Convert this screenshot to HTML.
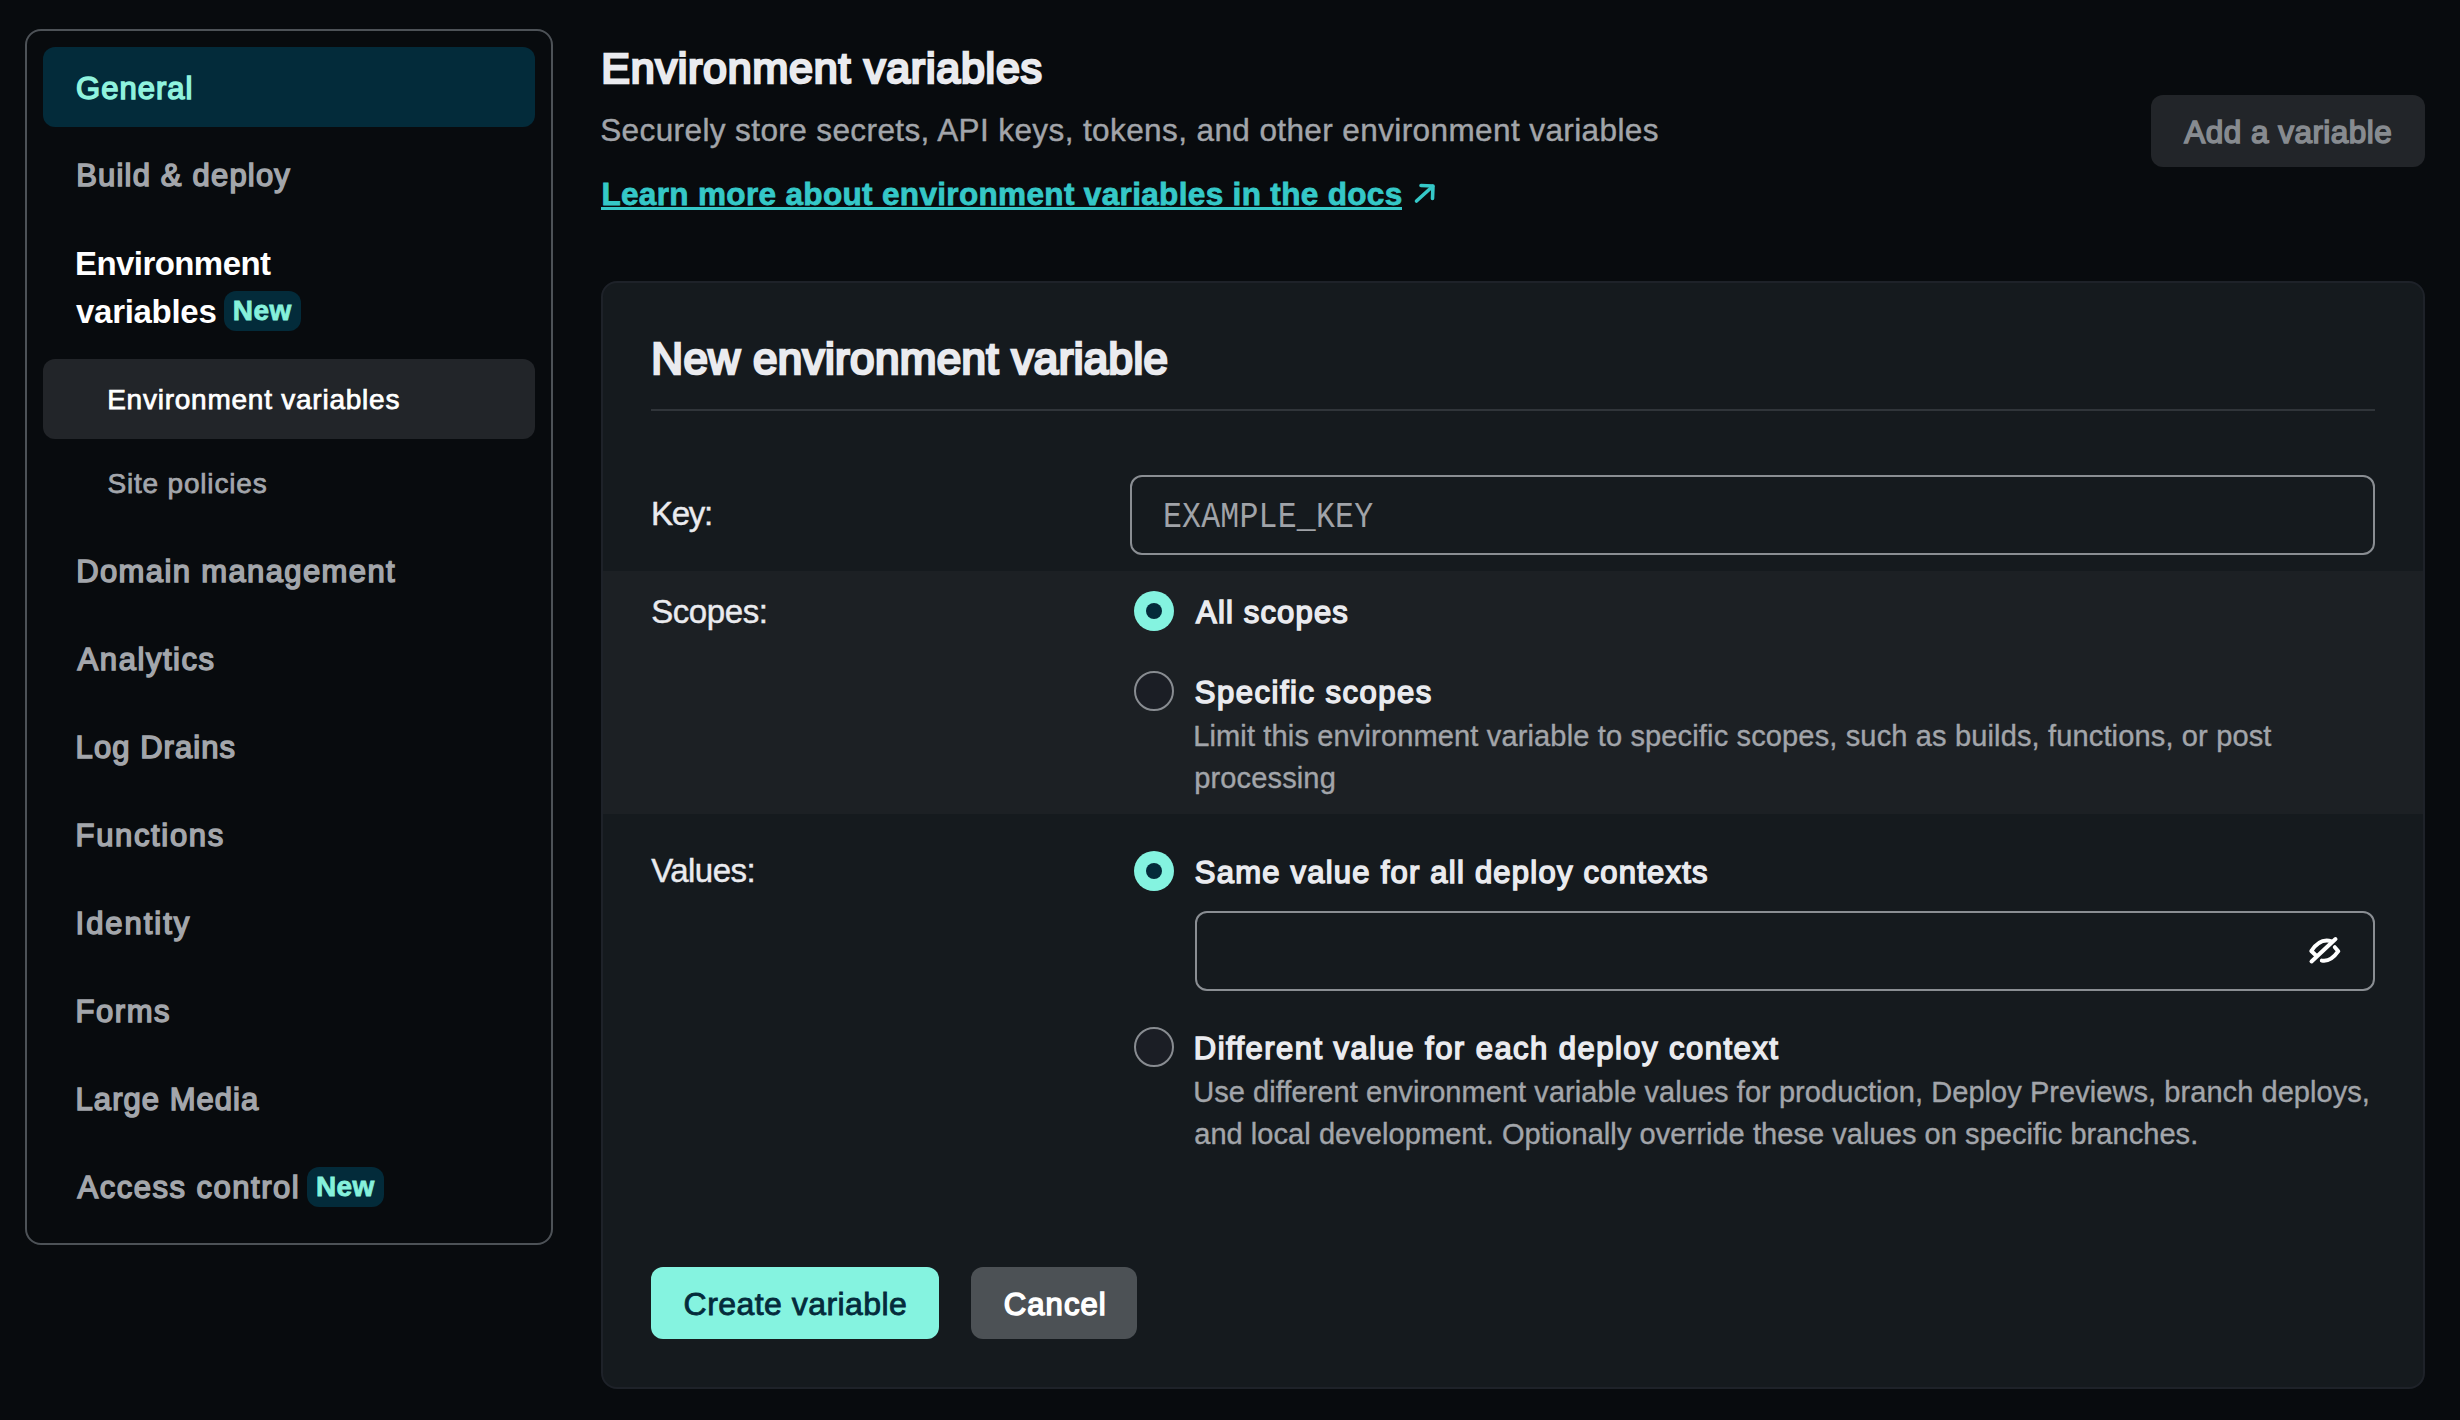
<!DOCTYPE html>
<html><head><meta charset="utf-8"><style>
html,body{margin:0;padding:0;}
body{width:2460px;height:1420px;background:#080b0e;position:relative;overflow:hidden;font-family:"Liberation Sans",sans-serif;}
.abs,.t{position:absolute;}
.t{white-space:nowrap;}
.box{position:absolute;box-sizing:border-box;}
</style></head><body>
<div class="box" style="left:25px;top:29px;width:528px;height:1216px;border:2px solid #4d5257;border-radius:16px;"></div>
<div class="box" style="left:43px;top:47px;width:492px;height:80px;background:#032b3a;border-radius:12px;"></div>
<div class="box" style="left:224px;top:291px;width:77px;height:40px;background:#032b3a;border-radius:12px;"></div>
<div class="box" style="left:43px;top:359px;width:492px;height:80px;background:#222529;border-radius:12px;"></div>
<div class="box" style="left:307px;top:1167px;width:77px;height:40px;background:#032b3a;border-radius:12px;"></div>

<div class="box" style="left:2151px;top:95px;width:274px;height:72px;background:#222529;border-radius:12px;"></div>
<div class="box" style="left:601px;top:281px;width:1824px;height:1108px;background:#151a1e;border:2px solid #1e2229;border-radius:16px;overflow:hidden;">
  <div class="box" style="left:0;top:288px;width:100%;height:243px;background:#1c2024;"></div>
</div>
<div class="box" style="left:651px;top:409px;width:1724px;height:2px;background:#30353a;"></div>
<div class="box" style="left:1130px;top:475px;width:1245px;height:80px;border:2px solid #8a8e93;border-radius:12px;"></div>
<div class="box" style="left:1195px;top:911px;width:1180px;height:80px;border:2px solid #8a8e93;border-radius:12px;"></div>

<div class="box" style="left:1134px;top:591px;width:40px;height:40px;border-radius:50%;background:#84f3e0;"></div>
<div class="box" style="left:1146px;top:603px;width:16px;height:16px;border-radius:50%;background:#042a3a;"></div>
<div class="box" style="left:1134px;top:671px;width:40px;height:40px;border-radius:50%;background:#1b1e25;border:2px solid #888c91;"></div>
<div class="box" style="left:1134px;top:851px;width:40px;height:40px;border-radius:50%;background:#84f3e0;"></div>
<div class="box" style="left:1146px;top:863px;width:16px;height:16px;border-radius:50%;background:#042a3a;"></div>
<div class="box" style="left:1134px;top:1027px;width:40px;height:40px;border-radius:50%;background:#1b1e25;border:2px solid #888c91;"></div>

<div class="box" style="left:651px;top:1267px;width:288px;height:72px;background:#85f3e0;border-radius:12px;"></div>
<div class="box" style="left:971px;top:1267px;width:166px;height:72px;background:#4c5155;border-radius:12px;"></div>
<div class="box" style="left:601px;top:207px;width:801px;height:3px;background:#35c8c8;"></div>
<svg class="abs" style="left:2295px;top:920px" width="60" height="60" viewBox="0 0 60 60" fill="none" stroke="#ffffff" stroke-width="4" stroke-linecap="round" stroke-linejoin="round">
<path d="M16.5 41.5 L40.5 19"/>
<path d="M36.5 21.3 C28.5 18.8 21.5 23 16.3 31 L21 35.5"/>
<path d="M26.8 40.6 C33 41.8 38.5 38 43.3 31.2 L39.8 27.2"/>
</svg>
<svg class="abs" style="left:1410px;top:178px" width="30" height="30" viewBox="0 0 30 30" fill="none" stroke="#35c8c8" stroke-width="3.6" stroke-linecap="round" stroke-linejoin="round">
<path d="M6.5 23 L22.5 8.5"/><path d="M11 7.5 L23 8 L22.5 20.5"/></svg>
<div class="t" style="left:76.1px;top:69.5px;font:normal 31px/37px 'Liberation Sans';letter-spacing:1.00px;color:#90f3de;-webkit-text-stroke:1.50px #90f3de;">General</div>
<div class="t" style="left:76.2px;top:157.1px;font:normal 31px/37px 'Liberation Sans';letter-spacing:1.19px;color:#a3a6ab;-webkit-text-stroke:1.50px #a3a6ab;">Build &amp; deploy</div>
<div class="t" style="left:75.0px;top:243.6px;font:bold 33px/40px 'Liberation Sans';letter-spacing:-0.57px;color:#ffffff;">Environment</div>
<div class="t" style="left:76.0px;top:291.6px;font:bold 33px/40px 'Liberation Sans';letter-spacing:-0.29px;color:#ffffff;">variables</div>
<div class="t" style="left:232.8px;top:294.2px;font:bold 28px/34px 'Liberation Sans';letter-spacing:0.50px;color:#86f1dc;-webkit-text-stroke:0.80px #86f1dc;">New</div>
<div class="t" style="left:107.2px;top:382.7px;font:normal 28px/34px 'Liberation Sans';letter-spacing:0.76px;color:#ffffff;-webkit-text-stroke:0.75px #ffffff;">Environment variables</div>
<div class="t" style="left:107.4px;top:466.9px;font:normal 28px/34px 'Liberation Sans';letter-spacing:0.82px;color:#a3a6ab;-webkit-text-stroke:0.75px #a3a6ab;">Site policies</div>
<div class="t" style="left:76.2px;top:552.8px;font:normal 31px/37px 'Liberation Sans';letter-spacing:1.38px;color:#a3a6ab;-webkit-text-stroke:1.50px #a3a6ab;">Domain management</div>
<div class="t" style="left:77.6px;top:640.8px;font:normal 31px/37px 'Liberation Sans';letter-spacing:1.56px;color:#a3a6ab;-webkit-text-stroke:1.50px #a3a6ab;">Analytics</div>
<div class="t" style="left:75.6px;top:728.8px;font:normal 31px/37px 'Liberation Sans';letter-spacing:1.05px;color:#a3a6ab;-webkit-text-stroke:1.50px #a3a6ab;">Log Drains</div>
<div class="t" style="left:75.6px;top:816.8px;font:normal 31px/37px 'Liberation Sans';letter-spacing:1.65px;color:#a3a6ab;-webkit-text-stroke:1.50px #a3a6ab;">Functions</div>
<div class="t" style="left:75.6px;top:904.8px;font:normal 31px/37px 'Liberation Sans';letter-spacing:1.96px;color:#a3a6ab;-webkit-text-stroke:1.50px #a3a6ab;">Identity</div>
<div class="t" style="left:75.6px;top:992.8px;font:normal 31px/37px 'Liberation Sans';letter-spacing:1.54px;color:#a3a6ab;-webkit-text-stroke:1.50px #a3a6ab;">Forms</div>
<div class="t" style="left:75.6px;top:1080.8px;font:normal 31px/37px 'Liberation Sans';letter-spacing:1.03px;color:#a3a6ab;-webkit-text-stroke:1.50px #a3a6ab;">Large Media</div>
<div class="t" style="left:77.6px;top:1168.8px;font:normal 31px/37px 'Liberation Sans';letter-spacing:1.50px;color:#a3a6ab;-webkit-text-stroke:1.50px #a3a6ab;">Access control</div>
<div class="t" style="left:315.9px;top:1170.2px;font:bold 28px/34px 'Liberation Sans';letter-spacing:0.45px;color:#86f1dc;-webkit-text-stroke:0.80px #86f1dc;">New</div>
<div class="t" style="left:601.3px;top:42.0px;font:normal 43px/52px 'Liberation Sans';letter-spacing:0.77px;color:#eaebef;-webkit-text-stroke:2.58px #eaebef;">Environment variables</div>
<div class="t" style="left:600.2px;top:110.9px;font:normal 31.5px/38px 'Liberation Sans';letter-spacing:0.40px;color:#a2a5aa;-webkit-text-stroke:0.42px #a2a5aa;">Securely store secrets, API keys, tokens, and other environment variables</div>
<div class="t" style="left:601.4px;top:174.7px;font:bold 31.5px/38px 'Liberation Sans';letter-spacing:0.34px;color:#35c8c8;-webkit-text-stroke:0.80px #35c8c8;">Learn more about environment variables in the docs</div>
<div class="t" style="left:2184.3px;top:112.7px;font:normal 31.5px/38px 'Liberation Sans';letter-spacing:0.47px;color:#878b90;-webkit-text-stroke:1.53px #878b90;">Add a variable</div>
<div class="t" style="left:651.3px;top:332.0px;font:normal 44px/53px 'Liberation Sans';letter-spacing:0.35px;color:#eaebef;-webkit-text-stroke:2.64px #eaebef;">New environment variable</div>
<div class="t" style="left:650.9px;top:494.3px;font:normal 33px/40px 'Liberation Sans';letter-spacing:-1.23px;color:#eaebef;-webkit-text-stroke:0.44px #eaebef;">Key:</div>
<div class="t" style="left:1163.0px;top:499.6px;font:normal 31.5px/38px 'Liberation Mono';letter-spacing:0.22px;color:#a0a3a8;transform:scaleY(1.18);transform-origin:0 27.4px;">EXAMPLE_KEY</div>
<div class="t" style="left:651.2px;top:591.8px;font:normal 33px/40px 'Liberation Sans';letter-spacing:-0.42px;color:#eaebef;-webkit-text-stroke:0.44px #eaebef;">Scopes:</div>
<div class="t" style="left:1196.1px;top:594.2px;font:normal 31px/37px 'Liberation Sans';letter-spacing:1.16px;color:#eaebef;-webkit-text-stroke:1.50px #eaebef;">All scopes</div>
<div class="t" style="left:1194.8px;top:674.2px;font:normal 31px/37px 'Liberation Sans';letter-spacing:1.51px;color:#eaebef;-webkit-text-stroke:1.50px #eaebef;">Specific scopes</div>
<div class="t" style="left:1193.2px;top:718.8px;font:normal 29px/35px 'Liberation Sans';letter-spacing:0.15px;color:#a2a5aa;-webkit-text-stroke:0.39px #a2a5aa;">Limit this environment variable to specific scopes, such as builds, functions, or post</div>
<div class="t" style="left:1194.2px;top:760.8px;font:normal 29px/35px 'Liberation Sans';letter-spacing:0.15px;color:#a2a5aa;-webkit-text-stroke:0.39px #a2a5aa;">processing</div>
<div class="t" style="left:651.2px;top:851.3px;font:normal 33px/40px 'Liberation Sans';letter-spacing:-0.52px;color:#eaebef;-webkit-text-stroke:0.44px #eaebef;">Values:</div>
<div class="t" style="left:1194.8px;top:853.7px;font:normal 31px/37px 'Liberation Sans';letter-spacing:1.23px;color:#eaebef;-webkit-text-stroke:1.50px #eaebef;">Same value for all deploy contexts</div>
<div class="t" style="left:1193.8px;top:1030.2px;font:normal 31px/37px 'Liberation Sans';letter-spacing:1.46px;color:#eaebef;-webkit-text-stroke:1.50px #eaebef;">Different value for each deploy context</div>
<div class="t" style="left:1193.2px;top:1074.8px;font:normal 29px/35px 'Liberation Sans';letter-spacing:0.06px;color:#a2a5aa;-webkit-text-stroke:0.39px #a2a5aa;">Use different environment variable values for production, Deploy Previews, branch deploys,</div>
<div class="t" style="left:1194.2px;top:1116.8px;font:normal 29px/35px 'Liberation Sans';letter-spacing:0.06px;color:#a2a5aa;-webkit-text-stroke:0.39px #a2a5aa;">and local development. Optionally override these values on specific branches.</div>
<div class="t" style="left:683.6px;top:1285.0px;font:normal 32px/38px 'Liberation Sans';letter-spacing:0.45px;color:#042b3b;-webkit-text-stroke:0.85px #042b3b;">Create variable</div>
<div class="t" style="left:1003.8px;top:1285.5px;font:normal 31px/37px 'Liberation Sans';letter-spacing:1.08px;color:#ffffff;-webkit-text-stroke:1.50px #ffffff;">Cancel</div>
</body></html>
